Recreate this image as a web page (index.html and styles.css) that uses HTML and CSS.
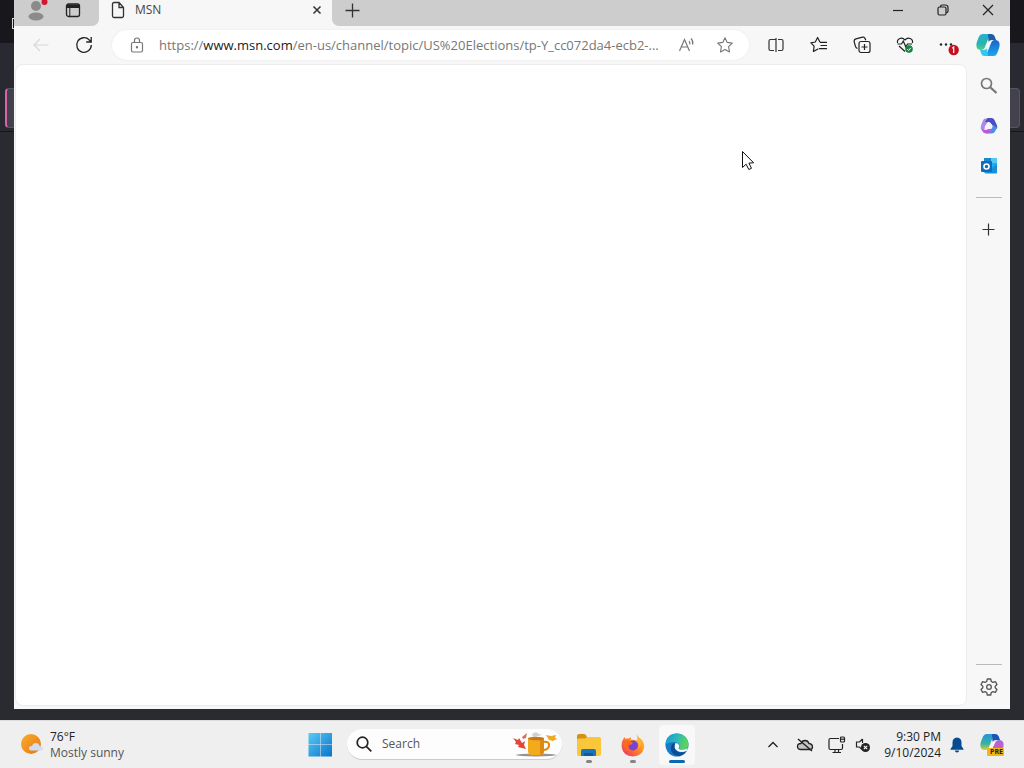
FILE: index.html
```html
<!DOCTYPE html>
<html lang="en">
<head>
<meta charset="utf-8">
<title>MSN</title>
<link rel="stylesheet" href="styles.css">
</head>
<body>
<main class="desktop">
  <div class="back-top"></div>
  <div class="back-notch"></div>
  <div class="back-field"></div>
  <section class="window">
    <header class="titlebar">
      <div class="title-left">
        <button class="profile" aria-label="Profile"><svg width="24" height="22" viewBox="0 0 24 22"><circle cx="10" cy="7" r="5" fill="#8d8b89"/><ellipse cx="10" cy="17.500" rx="7.500" ry="4" fill="#8d8b89"/><circle cx="18.500" cy="3" r="3" fill="#d3152e"/></svg></button>
        <button class="tabs-menu" aria-label="Tab actions"><svg width="16" height="16" viewBox="0 0 16 16"><rect x="1.500" y="2" width="13" height="12.500" rx="2" fill="none" stroke="#222" stroke-width="1.300"/><path d="M2 3h12v2.500H2z" fill="#222" stroke="#222"/><path d="M4.800 6v8" stroke="#222"/></svg></button>
      </div>
      <div class="tab">
        <svg width="14" height="18" viewBox="0 0 14 18" fill="none" stroke="#333" stroke-width="1.300"><path d="M1.500 3a1.500 1.500 0 0 1 1.500-1.500h5l4.500 5V15a1.500 1.500 0 0 1-1.500 1.500H3A1.500 1.500 0 0 1 1.500 15zM8 1.500v5h4.500"/></svg>
        <span class="tab-title">MSN</span>
        <button class="tab-close" aria-label="Close tab"><svg width="10" height="10" viewBox="0 0 10 10"><path d="M1.500 1.500l7 7M8.500 1.500l-7 7" stroke="#333" stroke-width="1.500"/></svg></button>
      </div>
      <div class="title-right">
        <button class="new-tab" aria-label="New tab"><svg width="15" height="15" viewBox="0 0 15 15"><path d="M7.500 .5v14M.5 7.500h14" stroke="#333" stroke-width="1.300"/></svg></button>
        <div class="controls">
          <button aria-label="Minimize"><svg width="10" height="10" viewBox="0 0 10 10"><path d="M0 5.500h10" stroke="#222" stroke-width="1.200"/></svg></button>
          <button aria-label="Restore"><svg width="12" height="12" viewBox="0 0 12 12" fill="none" stroke="#222" stroke-width="1.200"><rect x="1" y="3" width="8" height="8" rx="1.500"/><path d="M3.500 3V2.500A1.500 1.500 0 0 1 5 1h3.500A2.500 2.500 0 0 1 11 3.500V7a1.500 1.500 0 0 1-2 1.500"/></svg></button>
          <button aria-label="Close"><svg width="12" height="12" viewBox="0 0 12 12"><path d="M1 1l10 10M11 1L1 11" stroke="#222" stroke-width="1.200"/></svg></button>
        </div>
      </div>
    </header>
    <nav class="toolbar" aria-label="Browser">
      <button class="tool" aria-label="Back" disabled><svg width="16" height="14" viewBox="0 0 16 14" fill="none" stroke="#d8d8d8" stroke-width="1.200"><path d="M15.500 7H1M7 1L1 7l6 6"/></svg></button>
      <button class="tool" aria-label="Refresh"><svg width="18" height="18" viewBox="0 0 18 18" fill="none" stroke="#222" stroke-width="1.300"><path d="M16.300 9A7.300 7.300 0 1 1 14.300 4L16 5.600M16.200 1v5h-5"/></svg></button>
      <form class="omnibox">
        <button type="button" class="lock" aria-label="View site information"><svg width="14" height="16" viewBox="0 0 14 16" fill="none" stroke="#777" stroke-width="1.200"><rect x="1.500" y="5.500" width="11" height="9.500" rx="1.500"/><path d="M4.500 5.500V3.500a2.500 2.500 0 0 1 5 0v2"/><circle cx="7" cy="10.200" r=".6" fill="#666"/></svg></button>
        <div class="address">
          <span class="url">https://<b>www.msn.com</b>/en-us/channel/topic/US%20Elections/tp-Y_cc072da4-ecb2-...</span>
          <input class="url-input" type="text" aria-label="Address and search bar">
        </div>
        <button type="button" class="inner" aria-label="Read aloud"><svg width="18" height="16" viewBox="0 0 18 16" fill="none" stroke="#777" stroke-width="1.200"><path d="M1.500 14L6.500 2.500l5 11.500M3.300 10h6.400M11 4q1.200 1.500.8 3.300M13 1.500q2.500 2.500 1.600 6"/></svg></button>
        <button type="button" class="inner" aria-label="Add to favorites"><svg width="18" height="18" viewBox="0 0 18 18" fill="none" stroke="#777" stroke-width="1.100" stroke-linejoin="round"><path d="M9 1.700l2.200 4.700 5.100.7-3.700 3.600.9 5.200L9 13.400l-4.500 2.500.9-5.200L1.700 7.100l5.100-.7z"/></svg></button>
      </form>
      <button class="tool" aria-label="Split screen"><svg width="16" height="16" viewBox="0 0 16 16" fill="none" stroke="#333" stroke-width="1.200"><path d="M8 2.500H2.500A1.500 1.500 0 0 0 1 4v8a1.500 1.500 0 0 0 1.500 1.500H6M10 2.500h3.500A1.500 1.500 0 0 1 15 4v8a1.500 1.500 0 0 1-1.500 1.500H10M8 1v14"/></svg></button>
      <button class="tool" aria-label="Favorites"><svg width="18" height="18" viewBox="0 0 18 18" fill="none" stroke="#222" stroke-width="1.200" stroke-linejoin="round"><path d="M10 6.200L7.600 1.500 5.300 6 .9 6.800l3.200 3.400-.7 5.300 5-2.700M10 6.300h7M10.500 9.500H17M9 12.700h8"/></svg></button>
      <button class="tool" aria-label="Collections"><svg width="18" height="18" viewBox="0 0 18 18" fill="none" stroke="#222" stroke-width="1.200"><path d="M4.500 12.500Q3 12 2.500 10.500L1.200 5.800Q.8 3.500 3 2.900L9.500 1.200q2-.4 2.700 1.500l.5 1.600"/><rect x="6" y="5.500" width="11" height="11" rx="2"/><path d="M11.500 8v6M8.500 11h6"/></svg></button>
      <button class="tool" aria-label="Browser essentials"><svg width="18" height="18" viewBox="0 0 18 18" fill="none" stroke="#222" stroke-width="1.200"><path d="M1.600 7C.5 2.800 6 .2 9 4c3-3.800 8.500-1.200 7.400 3M9 15.500L3 10M1.500 8h4L7.300 5l2.500 6 1.700-3H16"/><circle cx="13" cy="13" r="3.800" fill="#168544" stroke="none"/><path d="M11.300 13.200l1.300 1.300 2.300-2.700" stroke="#fff" stroke-width="1"/></svg></button>
      <button class="tool" aria-label="Settings and more"><svg width="22" height="22" viewBox="0 0 22 22"><circle cx="4" cy="10.500" r="1.200" fill="#222"/><circle cx="9" cy="10.500" r="1.200" fill="#222"/><circle cx="14" cy="10.500" r="1.200" fill="#222"/><circle cx="16.700" cy="16" r="5.200" fill="#c50f1f"/><path d="M16.700 19v-6l-1.500 1.300" stroke="#fff" stroke-width="1.200" fill="none"/></svg></button>
      <button class="copilot" aria-label="Copilot"><svg width="24" height="24" viewBox="0 0 24 24"><defs><linearGradient id="ca" x1="0" y1="0" x2="0" y2="1"><stop offset="0" stop-color="#2baed0"/><stop offset=".6" stop-color="#28b4b0"/><stop offset="1" stop-color="#52cf86"/></linearGradient><linearGradient id="cb" x1="0" y1="0" x2="0" y2="1"><stop offset="0" stop-color="#1c62c8"/><stop offset="1" stop-color="#1aa8f0"/></linearGradient></defs><path d="M6.500 1H16q-2.500 1-3.500 4L9 14q-1 3-4 3-4 0-4.500-3.500Q0 11 1.200 8L3 3.500Q4 1 6.500 1z" fill="url(#ca)"/><path d="M12 1h3.500q2.500 0 3.300 2.500L20 7h-4q-2.500 0-3.500 2z" fill="#1a5fa8"/><path d="M17.500 23H8q2.500-1 3.500-4L15 10q1-3 4-3 4 0 4.500 3.500.5 2.500-.7 5.500L21 20.500q-1 2.500-3.500 2.500z" fill="url(#cb)"/><path d="M12 23H8.500Q6 23 5.200 20.500L4 17h3.500q2.500 0 3.500-2z" fill="#35c7ef"/><path d="M12.500 8.500h3L12 15.500H9z" fill="#f1f8fa"/></svg></button>
    </nav>
    <div class="content">
      <article class="page" aria-label="Page"></article>
      <aside class="sidebar">
        <button aria-label="Search"><svg width="18" height="18" viewBox="0 0 18 18" fill="none" stroke="#777"><circle cx="6.500" cy="6.500" r="5" stroke-width="1.700"/><path d="M10.500 10.500l6 5.500" stroke-width="2.300"/></svg></button>
        <button aria-label="Microsoft 365"><svg width="18" height="18" viewBox="0 0 18 18"><path d="M5.500 1.500h5L5 9l-1 6.500L1.500 13Q0 11 1.200 8L3 3.500q.7-2 2.500-2z" fill="#a98aee"/><path d="M7.500 1h4q2 0 3 2l2.300 5q1 2 0 4L12 8 9.500 5H5z" fill="#4b4fc0"/><path d="M17 10.500l-2 4q-1 2-3.500 2h-6Q10 16 11.500 13L13 8z" fill="#4a8ee8"/><path d="M1.500 12Q5 14 8.500 12l4-.5q-1.500 5-6 5Q3 16.500 1.500 12z" fill="#b65bd8"/><circle cx="9" cy="9" r="3" fill="#f5f4fc"/></svg></button>
        <button aria-label="Outlook"><svg width="18" height="18" viewBox="0 0 18 18"><rect x="4" y="1" width="13" height="15" rx="1" fill="#28a8ea"/><path d="M4 1h7v5H4z" fill="#1b86cb"/><path d="M11 1h6v5h-6z" fill="#50c9f5"/><path d="M17 7v8.500q0 1-1 1H5z" fill="#1490df"/><rect x="1" y="4" width="11" height="11" rx="1" fill="#0f6cbd"/><circle cx="6.500" cy="9.500" r="2.500" fill="none" stroke="#fff" stroke-width="1.600"/></svg></button>
        <hr>
        <button class="add" aria-label="Customize"><svg width="13" height="13" viewBox="0 0 13 13"><path d="M6.500 .5v12M.5 6.500h12" stroke="#333" stroke-width="1.200"/></svg></button>
        <hr class="last">
        <button class="gear" aria-label="Settings"><svg width="18" height="18" viewBox="0 0 18 18" fill="none" stroke="#555" stroke-width="1.300" stroke-linejoin="round"><path d="M7.300 1h3.400l.6 2.500 1.600.9 2.500-.8L17 6.500l-1.800 1.700v1.600l1.800 1.700-1.600 2.900-2.500-.8-1.600.9-.6 2.500H7.300l-.6-2.500-1.600-.9-2.500.8L1 11.500l1.800-1.700V8.200L1 6.500l1.600-2.900 2.500.8 1.600-.9z"/><circle cx="9" cy="9" r="2.300"/></svg></button>
      </aside>
    </div>
  </section>
  <svg class="cursor" width="14" height="22" viewBox="0 0 14 22"><path d="M1.500 1.500v16l3.600-3.300 2.700 5.300 2.700-1.200-2.600-5.200 4.700-.3z" fill="#fff" stroke="#111" stroke-width="1"/></svg>
</main>
<footer class="taskbar">
  <button class="weather">
    <svg width="24" height="24" viewBox="0 0 24 24"><defs><linearGradient id="su" x1="0" y1="0" x2="1" y2="1"><stop offset="0" stop-color="#f8ac2d"/><stop offset="1" stop-color="#e87812"/></linearGradient></defs><circle cx="11" cy="11" r="10" fill="url(#su)"/><path d="M12 17.500q-3 0-3-2.300t3-2.300q1-3 4-3t3.500 3Q23 13.500 23 15.500t-3 2z" fill="#cfdcf1"/></svg>
    <span class="weather-text"><span class="temp">76°F</span><span class="sky">Mostly sunny</span></span>
  </button>
  <div class="apps">
    <button class="app" aria-label="Start"><svg width="24" height="24" viewBox="0 0 24 24"><defs><linearGradient id="wi" x1="0" y1="0" x2="1" y2="1"><stop offset="0" stop-color="#5bcaf5"/><stop offset="1" stop-color="#0873cc"/></linearGradient></defs><path d="M.5 0H12v11.500H.5zM12.500 0H24v11.500H12.500zM.5 12H12v11.500H.5zM12.500 12H24v11.500H12.500z" fill="url(#wi)"/></svg></button>
    <label class="search">
      <svg width="16" height="16" viewBox="0 0 16 16" fill="none" stroke="#222" stroke-width="1.700"><circle cx="6.500" cy="6.500" r="5.300"/><path d="M10.300 10.300l5 5"/></svg>
      <input type="text" placeholder="Search" aria-label="Search">
      <svg width="47" height="26" viewBox="0 0 47 26"><ellipse cx="24" cy="24" rx="20" ry="1.500" fill="#9a928d"/><path d="M1 7l5 2 1-2 3 5 3-2-1 4 2 4-4-1-4-1 1-2-4-1 1-2z" fill="#df4836"/><path d="M10 6l5-4-1 5-3 1z" fill="#e0705c"/><path d="M20 3l4-2 3 2 3 1-4 1-5 1z" fill="#d2cfd2"/><path d="M31 11q7-1 6 4-1 4-6 4" fill="none" stroke="#dd8709" stroke-width="2"/><path d="M16 7h16v13q0 4-4 4h-8q-4 0-4-4z" fill="#f3ab1c"/><path d="M28 7h4v13q0 4-4 4z" fill="#dc8a10"/><ellipse cx="24" cy="7.500" rx="8" ry="1.800" fill="#c87616"/><path d="M34 4l5 1 5-1-1 3 2 1-4 2-4-1z" fill="#edaa29"/></svg>
    </label>
    <div class="pinned">
      <button class="app running" aria-label="File Explorer"><svg width="26" height="24" viewBox="0 0 26 24"><path d="M1 3q0-2 2-2h5q2 0 3 3v4H1z" fill="#d59212"/><path d="M1 7q0-1.500 1.500-1.500H9L11 4h12q2 0 2 2v15q0 2-2 2H3q-2 0-2-2z" fill="#fac63b"/><path d="M5 23v-5q0-2 2-2h11q2 0 2 2v5z" fill="#1774be"/><path d="M8 20h9v3H8z" fill="#155899"/></svg></button>
      <button class="app running" aria-label="Firefox"><svg width="24" height="24" viewBox="0 0 24 24"><defs><linearGradient id="fi" x1="1" y1="0" x2="0" y2="1"><stop offset="0" stop-color="#ffde35"/><stop offset=".45" stop-color="#ff8b24"/><stop offset="1" stop-color="#eb286b"/></linearGradient></defs><path d="M15 0q2 4 5 6 4 4 3 9-2 8-11 8.500Q2 23 .7 14q-.5-6 3-10l.5 2q2-1 4-.5L10 4v3q3-1 6 1 1-5-1-8z" fill="url(#fi)"/><circle cx="12" cy="12.500" r="5" fill="#7843d1"/><path d="M2 10q3-4 7-2l3 2q-1 2-4 2-2 5 3 6Q4 20 2 10z" fill="#ff671f"/><path d="M15 7q5 4 2 9 5-4 1-10z" fill="#ffb733"/></svg></button>
      <button class="app current" aria-label="Microsoft Edge"><svg width="24" height="24" viewBox="0 0 24 24"><defs><linearGradient id="ed" x1="0" y1="0" x2="1" y2=".3"><stop offset="0" stop-color="#1593d8"/><stop offset=".5" stop-color="#2ab8bd"/><stop offset="1" stop-color="#5dd35b"/></linearGradient></defs><circle cx="12" cy="12" r="11.500" fill="#1878cb"/><path d="M7 11q-3 7 2 10.500 6 4 12.500-3.500-6 3-9.500 0-3-3-2-8z" fill="#0d4b92"/><path d="M.5 12Q1 .5 12 .5q10 .5 11.500 10 .3 6-6 6.300-3.500 0-3.500-1.500 1.500-1.300.5-3.300Q13 9 9 9 3 9 .5 12z" fill="url(#ed)"/><path d="M10.500 10q-2.500 5 2 8 4 2 9 0l1.500-3q-2.500 2-6 1.800-3.500-.3-3.500-1.600 1.500-1.200.5-3.200-1-2-3.500-2z" fill="#f5fafc"/></svg></button>
    </div>
  </div>
  <div class="tray">
    <button class="tray-icon" aria-label="Show hidden icons"><svg width="12" height="8" viewBox="0 0 12 8"><path d="M1.500 6l4.500-4.500L10.500 6" fill="none" stroke="#222" stroke-width="1.300"/></svg></button>
    <button class="tray-icon" aria-label="OneDrive"><svg width="18" height="14" viewBox="0 0 18 14" fill="none" stroke="#222" stroke-width="1.300"><path d="M5 11.500q-3.500 0-3.500-3T5 5.500q1-3 4-3t4 3q3.500.5 3.500 3.500 0 2.500-3 2.500z" fill="#c5c5c5"/><path d="M2 1l14 12" stroke-width="1.500"/></svg></button>
    <button class="tray-icon" aria-label="Network"><svg width="18" height="18" viewBox="0 0 18 18" fill="none" stroke="#222" stroke-width="1.200"><path d="M11 2.500H2.500Q1 2.500 1 4v8q0 1.500 1.500 1.500H13q1.500 0 1.500-1.500V8M7 13.500v3M10.500 13.500v3M4.500 16.500H13"/><rect x="12.500" y="1" width="4" height="5" rx="1"/><path d="M12.500 3.200h4"/></svg></button>
    <button class="tray-icon sound" aria-label="Volume muted"><svg width="16" height="16" viewBox="0 0 16 16"><path d="M7.500 2v4M7.500 2L4.500 5H1.500v5h3L7 12.500" fill="none" stroke="#222" stroke-width="1.200"/><circle cx="10.500" cy="10.500" r="4.500" fill="#222"/><path d="M8.800 8.800l3.400 3.400m0-3.400l-3.400 3.400" stroke="#fff" stroke-width="1.100"/></svg></button>
    <button class="clock"><span>9:30 PM</span><span>9/10/2024</span></button>
    <button class="bell" aria-label="Notifications"><svg width="14" height="16" viewBox="0 0 14 16" fill="#064a91"><path d="M7 .5q4.500.5 4.500 5V9L13.500 12v.8H.5V12L2.500 9V5.500q0-4.500 4.500-5z"/><path d="M4.800 13.500h4.400Q9 15.500 7 15.500t-2.200-2z"/></svg></button>
    <button class="pre" aria-label="Copilot preview"><svg width="24" height="24" viewBox="0 0 24 24"><defs><linearGradient id="pa" x1="0" y1="0" x2="0" y2="1"><stop offset="0" stop-color="#2793e0"/><stop offset=".6" stop-color="#37b2a0"/><stop offset="1" stop-color="#d9cc36"/></linearGradient><linearGradient id="pb" x1="0" y1="0" x2="0" y2="1"><stop offset="0" stop-color="#a267e6"/><stop offset="1" stop-color="#ef5d98"/></linearGradient></defs><path d="M6.500 1H16q-2.500 1-3.500 4L9 14q-1 3-4 3-4 0-4.500-3.500Q0 11 1.200 8L3 3.500Q4 1 6.500 1z" fill="url(#pa)"/><path d="M12 1h3.500q2.500 0 3.300 2.500L20 7h-4q-2.500 0-3.500 2z" fill="#1a55b8"/><path d="M17.500 21H8q2.500-1 3.500-4L15 10q1-3 4-3 4 0 4.500 3.500.5 2.500-.7 5.500z" fill="url(#pb)"/><path d="M12.500 8.500h3L12 15.500H9z" fill="#f4f3fa"/><rect x="7" y="15" width="17" height="8" rx="1" fill="#f7b416"/></svg><span class="pre-tag">PRE</span></button>
  </div>
</footer>
</body>
</html>
```
FILE: styles.css
```css
* { box-sizing: border-box; }
body {
  margin: 0;
  height: 100vh;
  display: flex;
  flex-direction: column;
  overflow: hidden;
  background: #2a2b30;
  color: #222;
  font-family: "Open Sans", "Noto Sans", sans-serif;
  font-size: 12px;
  line-height: 16px;
}
button {
  border: 0;
  padding: 0;
  background: none;
  color: inherit;
  font: inherit;
  display: flex;
  align-items: center;
  justify-content: center;
}
svg { display: block; flex: none; }
input { font: inherit; border: 0; outline: 0; background: none; padding: 0; }

.desktop {
  position: relative;
  flex: 1;
  min-height: 0;
  display: flex;
  padding: 0 14px 11px;
}
.back-top {
  position: absolute;
  inset: 0 0 auto;
  height: 132px;
  background: linear-gradient(#18181c 43px, #292a31 43px);
  border-bottom: 1px solid #17171b;
}
.back-notch {
  position: absolute;
  left: 12px;
  top: 18px;
  width: 8px;
  height: 11px;
  border: 1px solid #ddd;
}
.back-field {
  position: absolute;
  left: 5px;
  right: 4px;
  top: 88px;
  height: 40px;
  border: 1px solid #55555c;
  border-left: 2px solid #d565a5;
  border-radius: 4px;
  background: #42414d;
}
.window {
  position: relative;
  flex: 1;
  min-width: 0;
  display: flex;
  flex-direction: column;
  background: #f7f7f7;
}

.titlebar { display: flex; height: 26px; }
.title-left, .title-right {
  display: flex;
  padding-bottom: 6px;
  background: #cdcdcd;
}
.title-left {
  width: 85px;
  border-bottom-right-radius: 7px;
}
.profile { width: 44px; padding-left: 4px; }
.tabs-menu { width: 30px; }
.tab {
  width: 233px;
  display: flex;
  align-items: center;
  padding: 0 10px 6px 12px;
}
.tab-title { flex: 1; margin-left: 10px; color: #444; }
.tab-close { width: 10px; }
.title-right {
  flex: 1;
  justify-content: space-between;
  border-bottom-left-radius: 7px;
}
.new-tab { width: 41px; }
.controls { display: flex; }
.controls button { width: 45px; }

.toolbar {
  display: flex;
  align-items: center;
  height: 38px;
  padding: 0 4px 0 5px;
}
.tool { width: 43px; height: 32px; }
.copilot { width: 37px; height: 32px; }
.omnibox {
  flex: 1;
  min-width: 0;
  height: 30px;
  margin: 0 5px 0 7px;
  display: flex;
  align-items: center;
  padding: 0 5px 0 18px;
  border-radius: 15px;
  background: #fff;
  box-shadow: 0 0 2px #e2e2e2;
}
.lock { width: 14px; }
.address {
  position: relative;
  flex: 1;
  min-width: 0;
  margin-left: 15px;
  font-size: 13px;
  line-height: 20px;
  color: #777;
  white-space: nowrap;
}
.url { display: block; overflow: hidden; }
.url b { font-weight: 400; color: #222; }
.url-input { position: absolute; inset: 0; width: 100%; }
.inner { width: 38px; height: 28px; }

.content { flex: 1; min-height: 0; display: flex; }
.page {
  flex: 1;
  margin: 0 0 3px 1px;
  border: 1px solid #ececec;
  border-radius: 8px;
  background: #fff;
}
.sidebar {
  width: 43px;
  display: flex;
  flex-direction: column;
  align-items: center;
  padding: 2px 0 4px;
}
.sidebar button { width: 40px; height: 40px; }
.sidebar hr {
  width: 26px;
  height: 1px;
  margin: 11px 0;
  border: 0;
  background: #bbb;
}
.sidebar .last { margin: auto 0 4px; }
.sidebar .gear { height: 36px; }
.cursor { position: absolute; left: 741px; top: 150px; }

.taskbar {
  height: 48px;
  display: flex;
  align-items: center;
  background: #efefef;
  border-top: 1px solid #ddd;
}
.weather { width: 298px; justify-content: flex-start; padding-left: 20px; gap: 6px; }
.weather-text { display: flex; flex-direction: column; text-align: left; }
.temp { color: #222; }
.sky { color: #555; }
.apps { display: flex; align-items: center; gap: 5px; }
.app {
  position: relative;
  width: 44px;
  height: 40px;
}
.pinned { display: flex; }
.search {
  width: 215px;
  height: 31px;
  display: flex;
  align-items: center;
  gap: 10px;
  padding: 0 3px 0 9px;
  border-radius: 16px;
  background: #fdfdfd;
  border-bottom: 1px solid #ccc;
}
.search input { flex: 1; min-width: 0; }
.search input::placeholder { color: #555; opacity: 1; }
.running::after, .current::after {
  content: "";
  position: absolute;
  bottom: 2px;
  width: 6px;
  height: 3px;
  border-radius: 2px;
  background: #858585;
}
.current { width: 36px; margin: 0 4px; border-radius: 4px; background: #f8f8f8; }
.current::after { width: 16px; background: #0969b5; }
.tray {
  margin-left: auto;
  display: flex;
  align-items: center;
  padding-right: 12px;
}
.tray-icon { width: 32px; height: 40px; }
.sound { width: 20px; }
.clock {
  width: 68px;
  flex-direction: column;
  align-items: flex-end;
}
.bell { width: 31px; }
.pre { position: relative; width: 40px; }
.pre-tag {
  position: absolute;
  right: 9px;
  bottom: 1px;
  font-size: 7px;
  font-weight: 700;
  line-height: 8px;
}
```
